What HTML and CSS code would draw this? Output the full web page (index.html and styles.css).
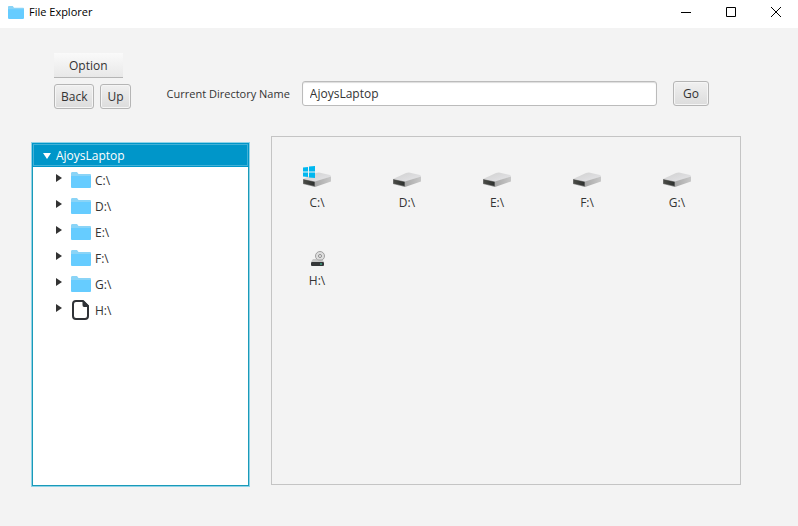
FILE: index.html
```html
<!DOCTYPE html>
<html lang="en">
<head>
<meta charset="utf-8">
<title>File Explorer</title>
<link rel="stylesheet" href="styles.css">
</head>
<body>
<svg class="defs" aria-hidden="true">
  <defs>
    <linearGradient id="drive-top" x1="0" y1="0" x2="1" y2="1">
      <stop offset="0" stop-color="#d0d0d0"/><stop offset="1" stop-color="#e6e6e9"/>
    </linearGradient>
    <linearGradient id="drive-side" x1="0" y1="0" x2="1" y2="0">
      <stop offset="0" stop-color="#a8a8a8"/><stop offset="1" stop-color="#c8c8c8"/>
    </linearGradient>
    <linearGradient id="drive-front" x1="0" y1="0" x2="1" y2="0">
      <stop offset="0" stop-color="#4c4d48"/><stop offset="1" stop-color="#2c2f2d"/>
    </linearGradient>
  </defs>
  <symbol id="folder" viewBox="0 0 20 16">
    <path d="M0 1.500Q0 0 1 0H6L7.500 2H19Q20 2 20 3V15H0Z" fill="#8ad4f7"/>
    <path d="M0 4H20V15Q20 16 19 16H1Q0 16 0 15Z" fill="#66ccff"/>
  </symbol>
  <symbol id="document" viewBox="0 0 20 22">
    <path d="M5 2H12L17 7V17Q17 20 14 20H5Q2 20 2 17V5Q2 2 5 2Z" fill="#fff" stroke="#2f3237" stroke-width="2"/>
    <path d="M11.500 2H13L17.500 6.500V8H13Q11.500 8 11.500 6Z" fill="#2f3237"/>
  </symbol>
  <symbol id="drive" viewBox="0 0 32 32">
    <path d="M2 16L15 10Q16 9.500 18 9.500L29 12Q30 12.500 30 13.500L14 19Z" fill="url(#drive-top)"/>
    <path d="M14 18.500L30 13.500V18.500L14 24Z" fill="url(#drive-side)"/>
    <path d="M2 16L14 18.500V24L2 21Z" fill="#858585"/>
    <path d="M2.500 16.500L13.500 19V23L2.500 20.500Z" fill="url(#drive-front)"/>
  </symbol>
  <symbol id="windows-logo" viewBox="0 0 12 12">
    <path d="M0 1.500L5 1V5.500H0ZM6 .5L12 0V5.500H6ZM0 6.500H5V11L0 10.500ZM6 6.500H12V12L6 11.500Z" fill="#00b7ef"/>
  </symbol>
  <symbol id="optical-drive" viewBox="0 0 32 32">
    <circle cx="19" cy="15" r="4.500" fill="#dedede" stroke="#a0a0a0"/>
    <circle cx="19" cy="15" r="1.500" fill="#f3f3f3" stroke="#8d8d8d"/>
    <path d="M12 18H21L23 21H10Z" fill="#b8b8b8" opacity=".75"/>
    <rect x="10" y="21" width="13" height="4" rx="1" fill="#343638"/>
    <path d="M19 23H21" stroke="#41d3a4"/>
  </symbol>
</svg>

<div class="window">
  <header class="titlebar">
    <svg class="titlebar-icon" aria-hidden="true"><use href="#folder"/></svg>
    <h1>File Explorer</h1>
    <div class="window-controls">
      <button type="button" aria-label="Minimize"><svg viewBox="0 0 12 12"><path d="M1 6.500H11"/></svg></button>
      <button type="button" aria-label="Maximize"><svg viewBox="0 0 12 12"><path d="M1.500 1.500H10.500V10.500H1.500Z"/></svg></button>
      <button type="button" aria-label="Close"><svg viewBox="0 0 12 12"><path d="M1 1L11 11M11 1L1 11"/></svg></button>
    </div>
  </header>

  <main>
    <div class="toolbar">
      <div class="commands">
        <button type="button" class="menu">Option</button>
        <div class="history">
          <button type="button" class="button">Back</button>
          <button type="button" class="button">Up</button>
        </div>
      </div>
      <form class="location">
        <label for="directory">Current Directory Name</label>
        <input id="directory" type="text" value="AjoysLaptop">
        <button type="button" class="button">Go</button>
      </form>
    </div>

    <div class="panes">
      <nav class="tree" aria-label="Folders">
        <button type="button" class="tree-root"><svg class="arrow-down" viewBox="0 0 8 6" aria-hidden="true"><path d="M0 0H8L4 6Z"/></svg>AjoysLaptop</button>
        <ul>
          <li><button type="button" aria-label="Expand C"><svg class="arrow" viewBox="0 0 6 8"><path d="M0 0L6 4L0 8Z"/></svg></button><svg class="node-icon"><use href="#folder"/></svg><span>C:\</span></li>
          <li><button type="button" aria-label="Expand D"><svg class="arrow" viewBox="0 0 6 8"><path d="M0 0L6 4L0 8Z"/></svg></button><svg class="node-icon"><use href="#folder"/></svg><span>D:\</span></li>
          <li><button type="button" aria-label="Expand E"><svg class="arrow" viewBox="0 0 6 8"><path d="M0 0L6 4L0 8Z"/></svg></button><svg class="node-icon"><use href="#folder"/></svg><span>E:\</span></li>
          <li><button type="button" aria-label="Expand F"><svg class="arrow" viewBox="0 0 6 8"><path d="M0 0L6 4L0 8Z"/></svg></button><svg class="node-icon"><use href="#folder"/></svg><span>F:\</span></li>
          <li><button type="button" aria-label="Expand G"><svg class="arrow" viewBox="0 0 6 8"><path d="M0 0L6 4L0 8Z"/></svg></button><svg class="node-icon"><use href="#folder"/></svg><span>G:\</span></li>
          <li><button type="button" aria-label="Expand H"><svg class="arrow" viewBox="0 0 6 8"><path d="M0 0L6 4L0 8Z"/></svg></button><svg class="node-icon document"><use href="#document"/></svg><span>H:\</span></li>
        </ul>
      </nav>

      <section class="files" aria-label="Contents">
        <button type="button" class="tile"><svg viewBox="0 0 32 32"><use href="#drive"/><use href="#windows-logo" x="2" y="3" width="12" height="12"/></svg><span>C:\</span></button>
        <button type="button" class="tile"><svg viewBox="0 0 32 32"><use href="#drive"/></svg><span>D:\</span></button>
        <button type="button" class="tile"><svg viewBox="0 0 32 32"><use href="#drive"/></svg><span>E:\</span></button>
        <button type="button" class="tile"><svg viewBox="0 0 32 32"><use href="#drive"/></svg><span>F:\</span></button>
        <button type="button" class="tile"><svg viewBox="0 0 32 32"><use href="#drive"/></svg><span>G:\</span></button>
        <button type="button" class="tile"><svg viewBox="0 0 32 32"><use href="#optical-drive"/></svg><span>H:\</span></button>
      </section>
    </div>
  </main>
</div>
</body>
</html>
```
FILE: styles.css
```css
* { box-sizing: border-box; }

body {
  margin: 0;
  background: #f3f3f3;
  color: #333;
  font: 12px/16px "Open Sans", "Noto Sans", sans-serif;
}

button, input { font: inherit; color: inherit; }

button {
  margin: 0;
  padding: 0;
  border: 0;
  background: none;
}

svg { display: block; flex: none; }

.defs { position: absolute; width: 0; height: 0; }

.window {
  display: flex;
  flex-direction: column;
  min-height: 100vh;
}

.titlebar {
  display: flex;
  align-items: center;
  height: 28px;
  padding: 0 0 4px 8px;
  background: #fff;
  color: #000;
}

.titlebar-icon { width: 16px; height: 13px; }

.titlebar h1 {
  flex: 1;
  margin: 0 0 0 5px;
  font-size: 11px;
  font-weight: 400;
}

.window-controls { display: flex; }

.window-controls button {
  display: grid;
  place-items: center;
  width: 45px;
  height: 24px;
}

.window-controls svg {
  width: 12px;
  height: 12px;
  fill: none;
  stroke: #000;
}

main {
  flex: 1;
  display: flex;
  flex-direction: column;
  gap: 27px;
  padding: 25px 57px 39px 31px;
}

.toolbar {
  display: flex;
  align-items: flex-end;
  gap: 36px;
  padding: 0 32px 0 23px;
}

.commands {
  display: flex;
  flex-direction: column;
  align-items: flex-start;
  gap: 6px;
}

.menu {
  height: 25px;
  padding: 1px 15px 0;
  border-bottom: 1px solid #b5b5b5;
  background: linear-gradient(#fafafa, #e8e8e8);
}

.history { display: flex; gap: 6px; }

.button {
  height: 25px;
  padding: 0 6px;
  border: 1px solid #b5b5b5;
  border-radius: 3px;
  background: linear-gradient(#f0f0f0, #dcdcdc);
  box-shadow: inset 0 0 0 1px #f5f5f5;
}

.location {
  flex: 1;
  display: flex;
  align-items: center;
  padding-bottom: 3px;
}

.location label {
  margin-right: 12px;
  font-size: 11px;
  white-space: nowrap;
}

.location input {
  flex: 1;
  min-width: 0;
  height: 25px;
  margin-right: 16px;
  padding: 0 7px;
  border: 1px solid #bbb;
  border-radius: 3px;
  background: #fff;
  box-shadow: inset 0 1px 1px #ddd;
}

.location .button { padding: 0 9px; }

.panes {
  flex: 1;
  display: grid;
  grid-template-columns: 219fr 470fr;
  gap: 21px;
}

.tree {
  margin-top: 6px;
  border: 1px solid #8fd3e8;
  background: #fff;
  box-shadow: inset 0 0 0 1px #1a9ab8;
}

.tree-root {
  display: flex;
  align-items: center;
  gap: 5px;
  width: 100%;
  height: 24px;
  padding: 1px 10px 0;
  border: 1px solid #0096c9;
  background: #0096c9;
  color: #fff;
  box-shadow: inset 0 0 0 1px #42b1d7;
}

.arrow-down { width: 8px; height: 6px; fill: #fff; }

.tree ul {
  margin: 0;
  padding: 0 0 0 24px;
  list-style: none;
}

.tree li {
  display: flex;
  align-items: center;
  height: 26px;
}

.tree li button {
  width: 15px;
  height: 12px;
  margin-bottom: 4px;
}

.tree li span { padding-top: 2px; }

.arrow { width: 6px; height: 8px; fill: #333; }

.node-icon {
  width: 20px;
  height: 16px;
  margin-right: 4px;
}

.node-icon.document { height: 22px; }

.files {
  display: grid;
  grid-template-columns: repeat(auto-fill, 90px);
  align-content: start;
  row-gap: 30px;
  margin-bottom: 2px;
  padding-top: 26px;
  border: 1px solid #c4c4c4;
}

.tile {
  display: flex;
  flex-direction: column;
  align-items: center;
}

.tile svg { width: 32px; height: 32px; }
```
